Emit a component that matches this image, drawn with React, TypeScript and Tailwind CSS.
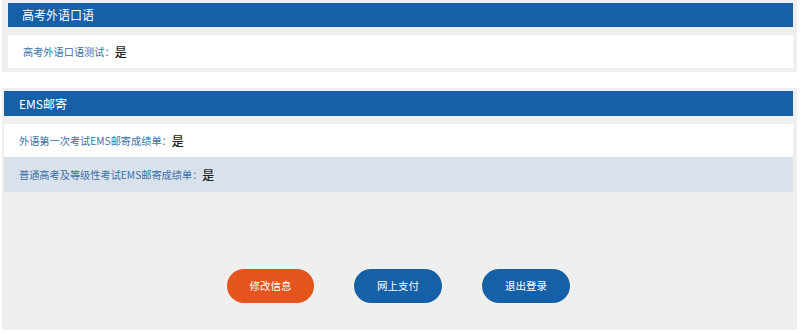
const font = { fontFamily: '"Noto Sans CJK SC", "Noto Sans", sans-serif' };

function Row({ label, value, tint }: { label: string; value: string; tint?: boolean }) {
  return (
    <div
      className={`flex items-center pl-[15px] text-[10.2px] ${tint ? "h-[35px] bg-[#d9e2eb]" : "h-[33px] bg-white"}`}
    >
      <span className="text-[#3b70a8]">{label}：</span>
      <span className="text-[12px] font-medium text-[#222]">{value}</span>
    </div>
  );
}

export default function App() {
  return (
    <div className="h-[333px] w-[800px] overflow-hidden bg-white" style={font}>
      {/* 高考外语口语 */}
      <div className="mx-[2px] h-[72px] w-[795px] bg-[#efefef] pl-[6px] pr-[4px] pt-[3px]">
        <div className="flex h-[24px] items-center bg-[#1660a8] pl-[14px] text-[12px] text-white">
          高考外语口语
        </div>
        <div className="mt-[8px] flex h-[33px] items-center bg-white pl-[15px] text-[10.2px]">
          <span className="text-[#3b70a8]">高考外语口语测试：</span>
          <span className="text-[12px] font-medium text-[#222]">是</span>
        </div>
      </div>

      {/* EMS邮寄 */}
      <div className="mx-[2px] mt-[16px] flex h-[242px] w-[795px] flex-col bg-[#efefef] pl-[2px] pr-[4px] pt-[3px]">
        <div className="flex h-[25px] items-center bg-[#1660a8] pl-[15px] text-[12px] text-white">
          EMS邮寄
        </div>
        <div className="mt-[8px]">
          <Row label="外语第一次考试EMS邮寄成绩单" value="是" />
          <Row label="普通高考及等级性考试EMS邮寄成绩单" value="是" tint />
        </div>
        <div className="mt-[77px] flex justify-center gap-[40px] text-[10.5px] text-white">
          <button className="h-[34px] w-[87px] rounded-full bg-[#e4541d]">修改信息</button>
          <button className="h-[34px] w-[88px] rounded-full bg-[#1660a8]">网上支付</button>
          <button className="h-[34px] w-[88px] rounded-full bg-[#1660a8]">退出登录</button>
        </div>
      </div>
    </div>
  );
}
